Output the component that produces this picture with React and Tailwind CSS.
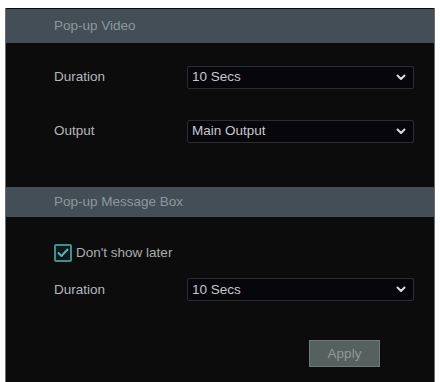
import React from "react";

function Chevron() {
  return (
    <svg width="10" height="7" viewBox="0 0 10 7" className="shrink-0">
      <path d="M1.5 1.5 L5 5 L8.5 1.5" fill="none" stroke="#d8dde0" strokeWidth="2" strokeLinecap="round" strokeLinejoin="round" />
    </svg>
  );
}

function SelectRow({ label, value, className = "" }) {
  return (
    <div className={`flex items-center pl-[48px] ${className}`}>
      <span className="w-[133px] text-[13.5px] text-[#b4b8ba]">{label}</span>
      <div className="flex h-[23px] w-[227px] items-center justify-between rounded-[2px] border border-[#2c2d33] bg-[#06060b] pl-[4px] pr-[7px]">
        <span className="text-[13.5px] text-[#c6c9cc]">{value}</span>
        <Chevron />
      </div>
    </div>
  );
}

function Header({ title, className = "" }) {
  return (
    <div className={`flex items-center bg-[#434e56] pl-[48px] ${className}`}>
      <span className="text-[13.5px] text-[#8d989e]">{title}</span>
    </div>
  );
}

export default function App() {
  return (
    <div className="h-[382px] w-[440px] bg-white pl-[5px] pt-[8px] font-['Liberation_Sans',Arial,sans-serif]">
      <div className="h-[374px] w-[430px] border-x border-[#6a6e70] bg-[#0c0c0c] pt-[1px]">
        <Header title="Pop-up Video" className="h-[34px]" />
        <SelectRow label="Duration" value="10 Secs" className="mt-[23px]" />
        <SelectRow label="Output" value="Main Output" className="mt-[31px]" />
        <Header title="Pop-up Message Box" className="mt-[44px] h-[30px]" />
        <div className="mt-[26px] flex items-center pl-[48px]">
          <div className="flex h-[18px] w-[18px] items-center justify-center rounded-[2px] border-2 border-[#3f8f8c] bg-[#0e1a1a]">
            <svg width="12" height="10" viewBox="0 0 12 10">
              <path d="M1.5 5 L4.5 8 L10.5 1.5" fill="none" stroke="#55b3ad" strokeWidth="2" strokeLinecap="round" strokeLinejoin="round" />
            </svg>
          </div>
          <span className="ml-[4px] text-[13.5px] text-[#a9aeb0]">Don't show later</span>
        </div>
        <SelectRow label="Duration" value="10 Secs" className="mt-[15px]" />
        <div className="mt-[39px] flex pl-[303px]">
          <button className="h-[27px] w-[71px] border border-[#6f7a78] bg-[#56605e] text-[13.5px] text-[#8f9996]">
            Apply
          </button>
        </div>
      </div>
    </div>
  );
}
